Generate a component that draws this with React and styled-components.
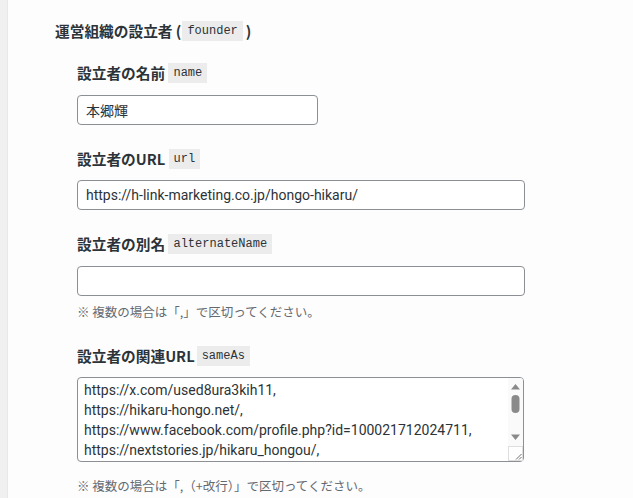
import React from 'react';
import styled, { createGlobalStyle } from 'styled-components';

const GlobalStyle = createGlobalStyle`
  html, body {
    margin: 0;
    padding: 0;
    background: #fdfdfd;
  }
  body {
    font-family: "Noto Sans CJK JP", sans-serif;
    font-size: 14px;
    color: #2c3338;
  }
`;

const fieldFont = `Roboto, "Noto Sans CJK JP", sans-serif`;

const Page = styled.div`
  display: flex;
  min-height: 498px;
`;

const SideStrip = styled.div`
  width: 7px;
  flex-shrink: 0;
  background: #f0f0f1;
  border-right: 1px solid #e8e8e8;
`;

const Content = styled.div`
  flex: 1;
  padding: 20px 0 0 47px;
`;

const Title = styled.h2`
  display: flex;
  align-items: center;
  height: 20px;
  margin: 0;
  font-size: 14.7px;
  font-weight: 700;
  color: #2c3338;
  white-space: pre;
`;

const Fields = styled.div`
  display: flex;
  flex-direction: column;
  padding-left: 22px;
  margin-top: 22px;
`;

const Field = styled.div`
  display: flex;
  flex-direction: column;
  align-items: flex-start;
  margin-bottom: ${p => p.mb || '23px'};
`;

const Label = styled.label`
  display: flex;
  align-items: center;
  height: 20px;
  font-size: 14.7px;
  font-weight: 700;
  margin-bottom: ${p => p.mb || '13px'};
  color: #2c3338;
  white-space: pre;
`;

const Code = styled.code`
  display: inline-block;
  font-family: "Liberation Mono", "DejaVu Sans Mono", monospace;
  font-size: 12px;
  font-weight: 400;
  line-height: 14px;
  padding: 3px 5px;
  margin: 1px ${p => p.mr || '0'} 0 ${p => p.ml || '0'};
  background: #ececec;
  color: #2c3338;
`;

const Input = styled.input`
  box-sizing: border-box;
  width: ${p => p.width || '448px'};
  height: 30px;
  padding: 0 8px;
  border: 1px solid #8c8f94;
  border-radius: 4px;
  background: #fff;
  font-family: ${fieldFont};
  font-size: 14px;
  color: #2c3338;
  outline: none;
`;

const AreaWrap = styled.div`
  position: relative;
  width: 447px;
  height: 85px;
`;

const TextArea = styled.textarea`
  box-sizing: border-box;
  display: block;
  width: 100%;
  height: 100%;
  padding: 2px 22px 2px 6px;
  border: 1px solid #8c8f94;
  border-radius: 4px;
  background: #fff;
  font-family: ${fieldFont};
  font-size: 14px;
  line-height: 20px;
  color: #2c3338;
  outline: none;
  resize: none;
  overflow: hidden;
  white-space: pre;
`;

/* drawn scrollbar + resize grip laid over the textarea's right edge */
const ScrollBar = styled.div`
  position: absolute;
  top: 1px;
  right: 1px;
  bottom: 1px;
  width: 15px;
  display: flex;
  flex-direction: column;
  background: #fafafa;
  border-top-right-radius: 3px;
  border-bottom-right-radius: 3px;
`;

const Grip = styled.div`
  margin-top: auto;
  width: 15px;
  height: 15px;
  line-height: 0;
`;

const sameAs = [
  'https://x.com/used8ura3kih11,',
  'https://hikaru-hongo.net/,',
  'https://www.facebook.com/profile.php?id=100021712024711,',
  'https://nextstories.jp/hikaru_hongou/,',
].join('\n');

function ScrollTrack() {
  return (
    <ScrollBar>
      <svg width="15" height="68" viewBox="0 0 15 68">
        <path d="M3 11.5 L7.5 6 L12 11.5 Z" fill="#8a8a8a" />
        <rect x="3.5" y="17" width="8" height="18" rx="4" fill="#8a8a8a" />
        <path d="M3 56.5 L7.5 62 L12 56.5 Z" fill="#8a8a8a" />
      </svg>
      <Grip>
        <svg width="15" height="15" viewBox="0 0 15 15">
          <rect x="0.5" y="0.5" width="14" height="14" fill="#fff" stroke="#dedede" />
          <path d="M13.5 8 L8 13.5 M13.5 11 L11 13.5" stroke="#6f6f6f" strokeWidth="1" />
        </svg>
      </Grip>
    </ScrollBar>
  );
}

const Note = styled.p`
  margin: ${p => p.mt || '7px'} 0 0;
  font-size: 12.5px;
  line-height: 18px;
  color: #646970;
`;

export default function App() {
  return (
    <Page>
      <GlobalStyle />
      <SideStrip />
      <Content>
        <Title>
          運営組織の設立者 (<Code ml="1px" mr="3px">founder</Code>)
        </Title>
        <Fields>
          <Field>
            <Label>
              設立者の名前 <Code>name</Code>
            </Label>
            <Input width="241px" defaultValue="本郷輝" />
          </Field>
          <Field>
            <Label mb="12px">
              設立者のURL <Code>url</Code>
            </Label>
            <Input defaultValue="https://h-link-marketing.co.jp/hongo-hikaru/" />
          </Field>
          <Field mb="24px">
            <Label>
              設立者の別名 <Code>alternateName</Code>
            </Label>
            <Input defaultValue="" />
            <Note>※ 複数の場合は「,」で区切ってください。</Note>
          </Field>
          <Field mb="0">
            <Label mb="12px">
              設立者の関連URL<Code ml="2px">sameAs</Code>
            </Label>
            <AreaWrap>
              <TextArea defaultValue={sameAs} />
              <ScrollTrack />
            </AreaWrap>
            <Note mt="15px">※ 複数の場合は「,（+改行）」で区切ってください。</Note>
          </Field>
        </Fields>
      </Content>
    </Page>
  );
}
